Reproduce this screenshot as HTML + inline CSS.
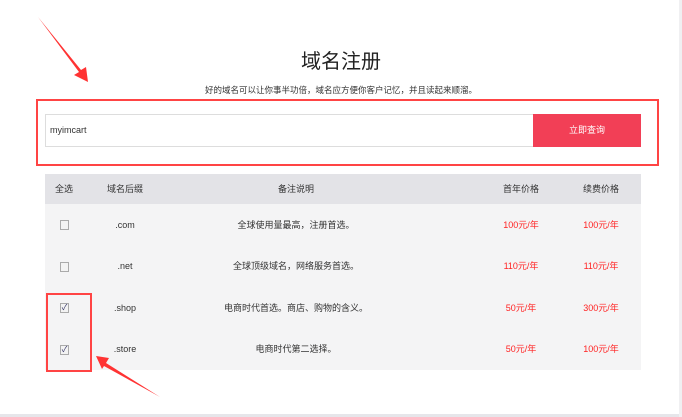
<!DOCTYPE html>
<html><head><meta charset="utf-8"><style>
body{margin:0;width:682px;height:417px;background:#fff;position:relative;overflow:hidden;font-family:"Liberation Sans","Noto Sans CJK SC",sans-serif;color:#333}
.a{position:absolute}
.t{text-align:center;font-size:9px;line-height:12px;height:12px}
.cb{position:absolute;width:7px;height:8px;border:1px solid #aaa;background:#f3f3f3;left:60px;font-size:8px;line-height:8px;color:#336;text-align:center}
.r{color:#f22}
</style></head><body>
<div class="a" style="left:0;right:0;top:45px;text-align:center;font-size:20px;color:#222">域名注册</div>
<div class="a" style="left:0;right:0;top:84px;text-align:center;font-size:8.5px;color:#333">好的域名可以让你事半功倍，域名应方便你客户记忆，并且读起来顺溜。</div>
<div class="a" style="left:36px;top:99px;width:619px;height:63px;border:2px solid #f44"></div>
<div class="a" style="left:45px;top:114px;width:486px;height:31px;border:1px solid #ddd;font-size:9px;line-height:31px;padding-left:4px;color:#333">myimcart</div>
<div class="a" style="left:533px;top:114px;width:108px;height:33px;background:#f23f56;color:#fff;font-size:9px;line-height:33px;text-align:center">立即查询</div>
<div class="a" style="left:45px;top:174px;width:596px;height:30px;background:#e3e3e7"></div>
<div class="a" style="left:45px;top:204px;width:596px;height:166px;background:#f4f4f5"></div>
<div class="a t" style="left:44px;width:40px;top:183px">全选</div>
<div class="a t" style="left:95px;width:60px;top:183px">域名后缀</div>
<div class="a t" style="left:226px;width:140px;top:183px">备注说明</div>
<div class="a t" style="left:491px;width:60px;top:183px">首年价格</div>
<div class="a t" style="left:571px;width:60px;top:183px">续费价格</div>

<div class="cb" style="top:220px"></div>
<div class="a t" style="left:95px;width:60px;top:219px">.com</div>
<div class="a t" style="left:186px;width:220px;top:219px">全球使用量最高，注册首选。</div>
<div class="a t r" style="left:491px;width:60px;top:219px">100元/年</div>
<div class="a t r" style="left:571px;width:60px;top:219px">100元/年</div>

<div class="cb" style="top:262px"></div>
<div class="a t" style="left:95px;width:60px;top:260px">.net</div>
<div class="a t" style="left:186px;width:220px;top:260px">全球顶级域名，网络服务首选。</div>
<div class="a t r" style="left:491px;width:60px;top:260px">110元/年</div>
<div class="a t r" style="left:571px;width:60px;top:260px">110元/年</div>

<div class="cb" style="top:303px">✓</div>
<div class="a t" style="left:95px;width:60px;top:302px">.shop</div>
<div class="a t" style="left:186px;width:220px;top:302px">电商时代首选。商店、购物的含义。</div>
<div class="a t r" style="left:491px;width:60px;top:302px">50元/年</div>
<div class="a t r" style="left:571px;width:60px;top:302px">300元/年</div>

<div class="cb" style="top:345px">✓</div>
<div class="a t" style="left:95px;width:60px;top:343px">.store</div>
<div class="a t" style="left:186px;width:220px;top:343px">电商时代第二选择。</div>
<div class="a t r" style="left:491px;width:60px;top:343px">50元/年</div>
<div class="a t r" style="left:571px;width:60px;top:343px">100元/年</div>

<div class="a" style="left:46px;top:293px;width:42px;height:75px;border:2px solid #f44"></div>
<div class="a" style="left:0;top:414px;width:682px;height:3px;background:#e6e6ea"></div>
<div class="a" style="left:679px;top:0;width:3px;height:417px;background:#f0f0f2"></div>
<svg class="a" style="left:0;top:0" width="682" height="417">
<path d="M38 17 L79 72 L74 75 L88 82 L86 67 L81 70 Z" fill="#f33"/>
<path d="M160 397 L106 363 L109 358 L96 356 L102 369 L104 366 Z" fill="#f33"/>
</svg>
</body></html>
